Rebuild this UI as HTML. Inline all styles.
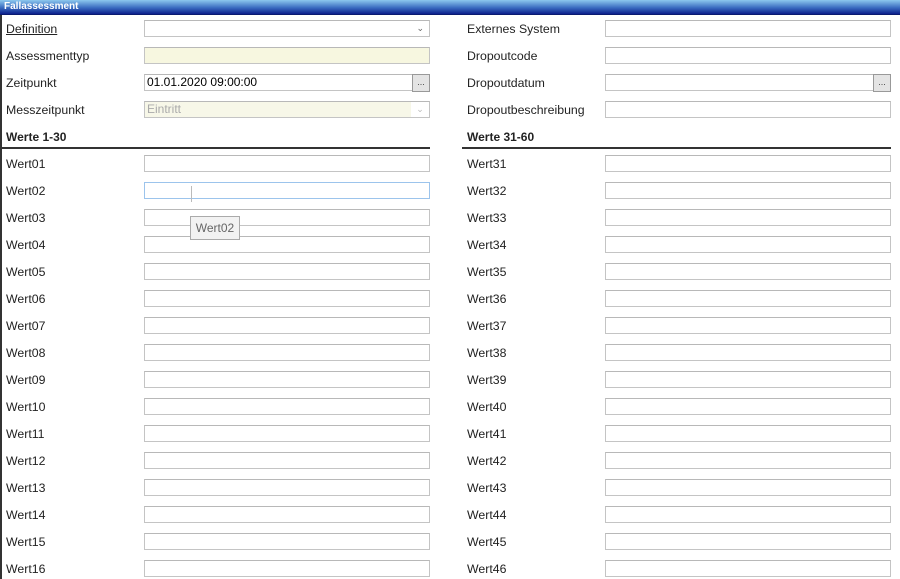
<!DOCTYPE html>
<html><head><meta charset="utf-8"><style>
*{box-sizing:border-box;margin:0;padding:0}
body{width:900px;height:579px;overflow:hidden;background:#fff;font-family:"Liberation Sans",Arial,sans-serif;font-size:12px;color:#222;position:relative}
.t{position:absolute;left:0;top:0;width:900px;height:15px;background:linear-gradient(#8cc8ee,#3a6cc0 55%,#0c1f8c);color:#fff;font-weight:bold;font-size:10px;line-height:14px;padding-left:4px;border-bottom:1px solid #0a1a70}
.lb{position:absolute;left:0;top:15px;width:2px;height:564px;background:#333}
.l{position:absolute;line-height:14px;white-space:nowrap;margin-top:1px;font-size:12.3px}
.i{position:absolute;height:17px;border:1px solid #c4c4c4;border-top-color:#b8b8b8;background:#fff;font-size:12px;line-height:15px;padding-left:2px}
.h{position:absolute;font-weight:bold;line-height:14px;margin-top:1px}
.hr{position:absolute;height:2px;background:#333;top:147px}
.b{position:absolute;width:18px;height:18px;border:1px solid #999;background:#e4e4e4;font-size:9px;text-align:center;line-height:14px;color:#444}
</style></head><body>
<div class="t">Fallassessment</div>
<div class="lb"></div>

<div class="l" style="left:6px;top:21px;text-decoration:underline">Definition</div>
<div class="i" style="left:144px;top:20px;width:286px"><span style="position:absolute;right:5px;top:0;font-size:9px;color:#666">&#8964;</span></div>
<div class="l" style="left:6px;top:48px">Assessmenttyp</div>
<div class="i" style="left:144px;top:47px;width:286px;background:#f7f7e0"></div>
<div class="l" style="left:6px;top:75px">Zeitpunkt</div>
<div class="i" style="left:144px;top:74px;width:269px;color:#000">01.01.2020 09:00:00</div>
<div class="b" style="left:412px;top:74px">...</div>
<div class="l" style="left:6px;top:102px">Messzeitpunkt</div>
<div class="i" style="left:144px;top:101px;width:286px;background:#f7f7e8;color:#aaa">Eintritt<span style="position:absolute;right:0;top:0;width:18px;height:15px;background:#fff;font-size:9px;color:#bbb;text-align:center">&#8964;</span></div>
<div class="h" style="left:6px;top:129px">Werte 1-30</div>
<div class="hr" style="left:0;width:430px"></div>

<div class="l" style="left:467px;top:21px">Externes System</div>
<div class="i" style="left:605px;top:20px;width:286px"></div>
<div class="l" style="left:467px;top:48px">Dropoutcode</div>
<div class="i" style="left:605px;top:47px;width:286px"></div>
<div class="l" style="left:467px;top:75px">Dropoutdatum</div>
<div class="i" style="left:605px;top:74px;width:269px"></div>
<div class="b" style="left:873px;top:74px">...</div>
<div class="l" style="left:467px;top:102px">Dropoutbeschreibung</div>
<div class="i" style="left:605px;top:101px;width:286px"></div>
<div class="h" style="left:467px;top:129px">Werte 31-60</div>
<div class="hr" style="left:462px;width:429px"></div>

<div class="l" style="left:6px;top:156px">Wert01</div><div class="i" style="left:144px;top:155px;width:286px"></div>
<div class="l" style="left:6px;top:183px">Wert02</div><div class="i" style="left:144px;top:182px;width:286px;border-color:#9cc4ec"></div>
<div class="l" style="left:6px;top:210px">Wert03</div><div class="i" style="left:144px;top:209px;width:286px"></div>
<div class="l" style="left:6px;top:237px">Wert04</div><div class="i" style="left:144px;top:236px;width:286px"></div>
<div class="l" style="left:6px;top:264px">Wert05</div><div class="i" style="left:144px;top:263px;width:286px"></div>
<div class="l" style="left:6px;top:291px">Wert06</div><div class="i" style="left:144px;top:290px;width:286px"></div>
<div class="l" style="left:6px;top:318px">Wert07</div><div class="i" style="left:144px;top:317px;width:286px"></div>
<div class="l" style="left:6px;top:345px">Wert08</div><div class="i" style="left:144px;top:344px;width:286px"></div>
<div class="l" style="left:6px;top:372px">Wert09</div><div class="i" style="left:144px;top:371px;width:286px"></div>
<div class="l" style="left:6px;top:399px">Wert10</div><div class="i" style="left:144px;top:398px;width:286px"></div>
<div class="l" style="left:6px;top:426px">Wert11</div><div class="i" style="left:144px;top:425px;width:286px"></div>
<div class="l" style="left:6px;top:453px">Wert12</div><div class="i" style="left:144px;top:452px;width:286px"></div>
<div class="l" style="left:6px;top:480px">Wert13</div><div class="i" style="left:144px;top:479px;width:286px"></div>
<div class="l" style="left:6px;top:507px">Wert14</div><div class="i" style="left:144px;top:506px;width:286px"></div>
<div class="l" style="left:6px;top:534px">Wert15</div><div class="i" style="left:144px;top:533px;width:286px"></div>
<div class="l" style="left:6px;top:561px">Wert16</div><div class="i" style="left:144px;top:560px;width:286px"></div>

<div class="l" style="left:467px;top:156px">Wert31</div><div class="i" style="left:605px;top:155px;width:286px"></div>
<div class="l" style="left:467px;top:183px">Wert32</div><div class="i" style="left:605px;top:182px;width:286px"></div>
<div class="l" style="left:467px;top:210px">Wert33</div><div class="i" style="left:605px;top:209px;width:286px"></div>
<div class="l" style="left:467px;top:237px">Wert34</div><div class="i" style="left:605px;top:236px;width:286px"></div>
<div class="l" style="left:467px;top:264px">Wert35</div><div class="i" style="left:605px;top:263px;width:286px"></div>
<div class="l" style="left:467px;top:291px">Wert36</div><div class="i" style="left:605px;top:290px;width:286px"></div>
<div class="l" style="left:467px;top:318px">Wert37</div><div class="i" style="left:605px;top:317px;width:286px"></div>
<div class="l" style="left:467px;top:345px">Wert38</div><div class="i" style="left:605px;top:344px;width:286px"></div>
<div class="l" style="left:467px;top:372px">Wert39</div><div class="i" style="left:605px;top:371px;width:286px"></div>
<div class="l" style="left:467px;top:399px">Wert40</div><div class="i" style="left:605px;top:398px;width:286px"></div>
<div class="l" style="left:467px;top:426px">Wert41</div><div class="i" style="left:605px;top:425px;width:286px"></div>
<div class="l" style="left:467px;top:453px">Wert42</div><div class="i" style="left:605px;top:452px;width:286px"></div>
<div class="l" style="left:467px;top:480px">Wert43</div><div class="i" style="left:605px;top:479px;width:286px"></div>
<div class="l" style="left:467px;top:507px">Wert44</div><div class="i" style="left:605px;top:506px;width:286px"></div>
<div class="l" style="left:467px;top:534px">Wert45</div><div class="i" style="left:605px;top:533px;width:286px"></div>
<div class="l" style="left:467px;top:561px">Wert46</div><div class="i" style="left:605px;top:560px;width:286px"></div>

<div style="position:absolute;left:191px;top:186px;width:1px;height:16px;background:#bbb"></div>
<div style="position:absolute;left:190px;top:216px;width:50px;height:24px;border:1px solid #aaa;background:#f2f2f2;color:#666;line-height:22px;text-align:center">Wert02</div>
</body></html>
